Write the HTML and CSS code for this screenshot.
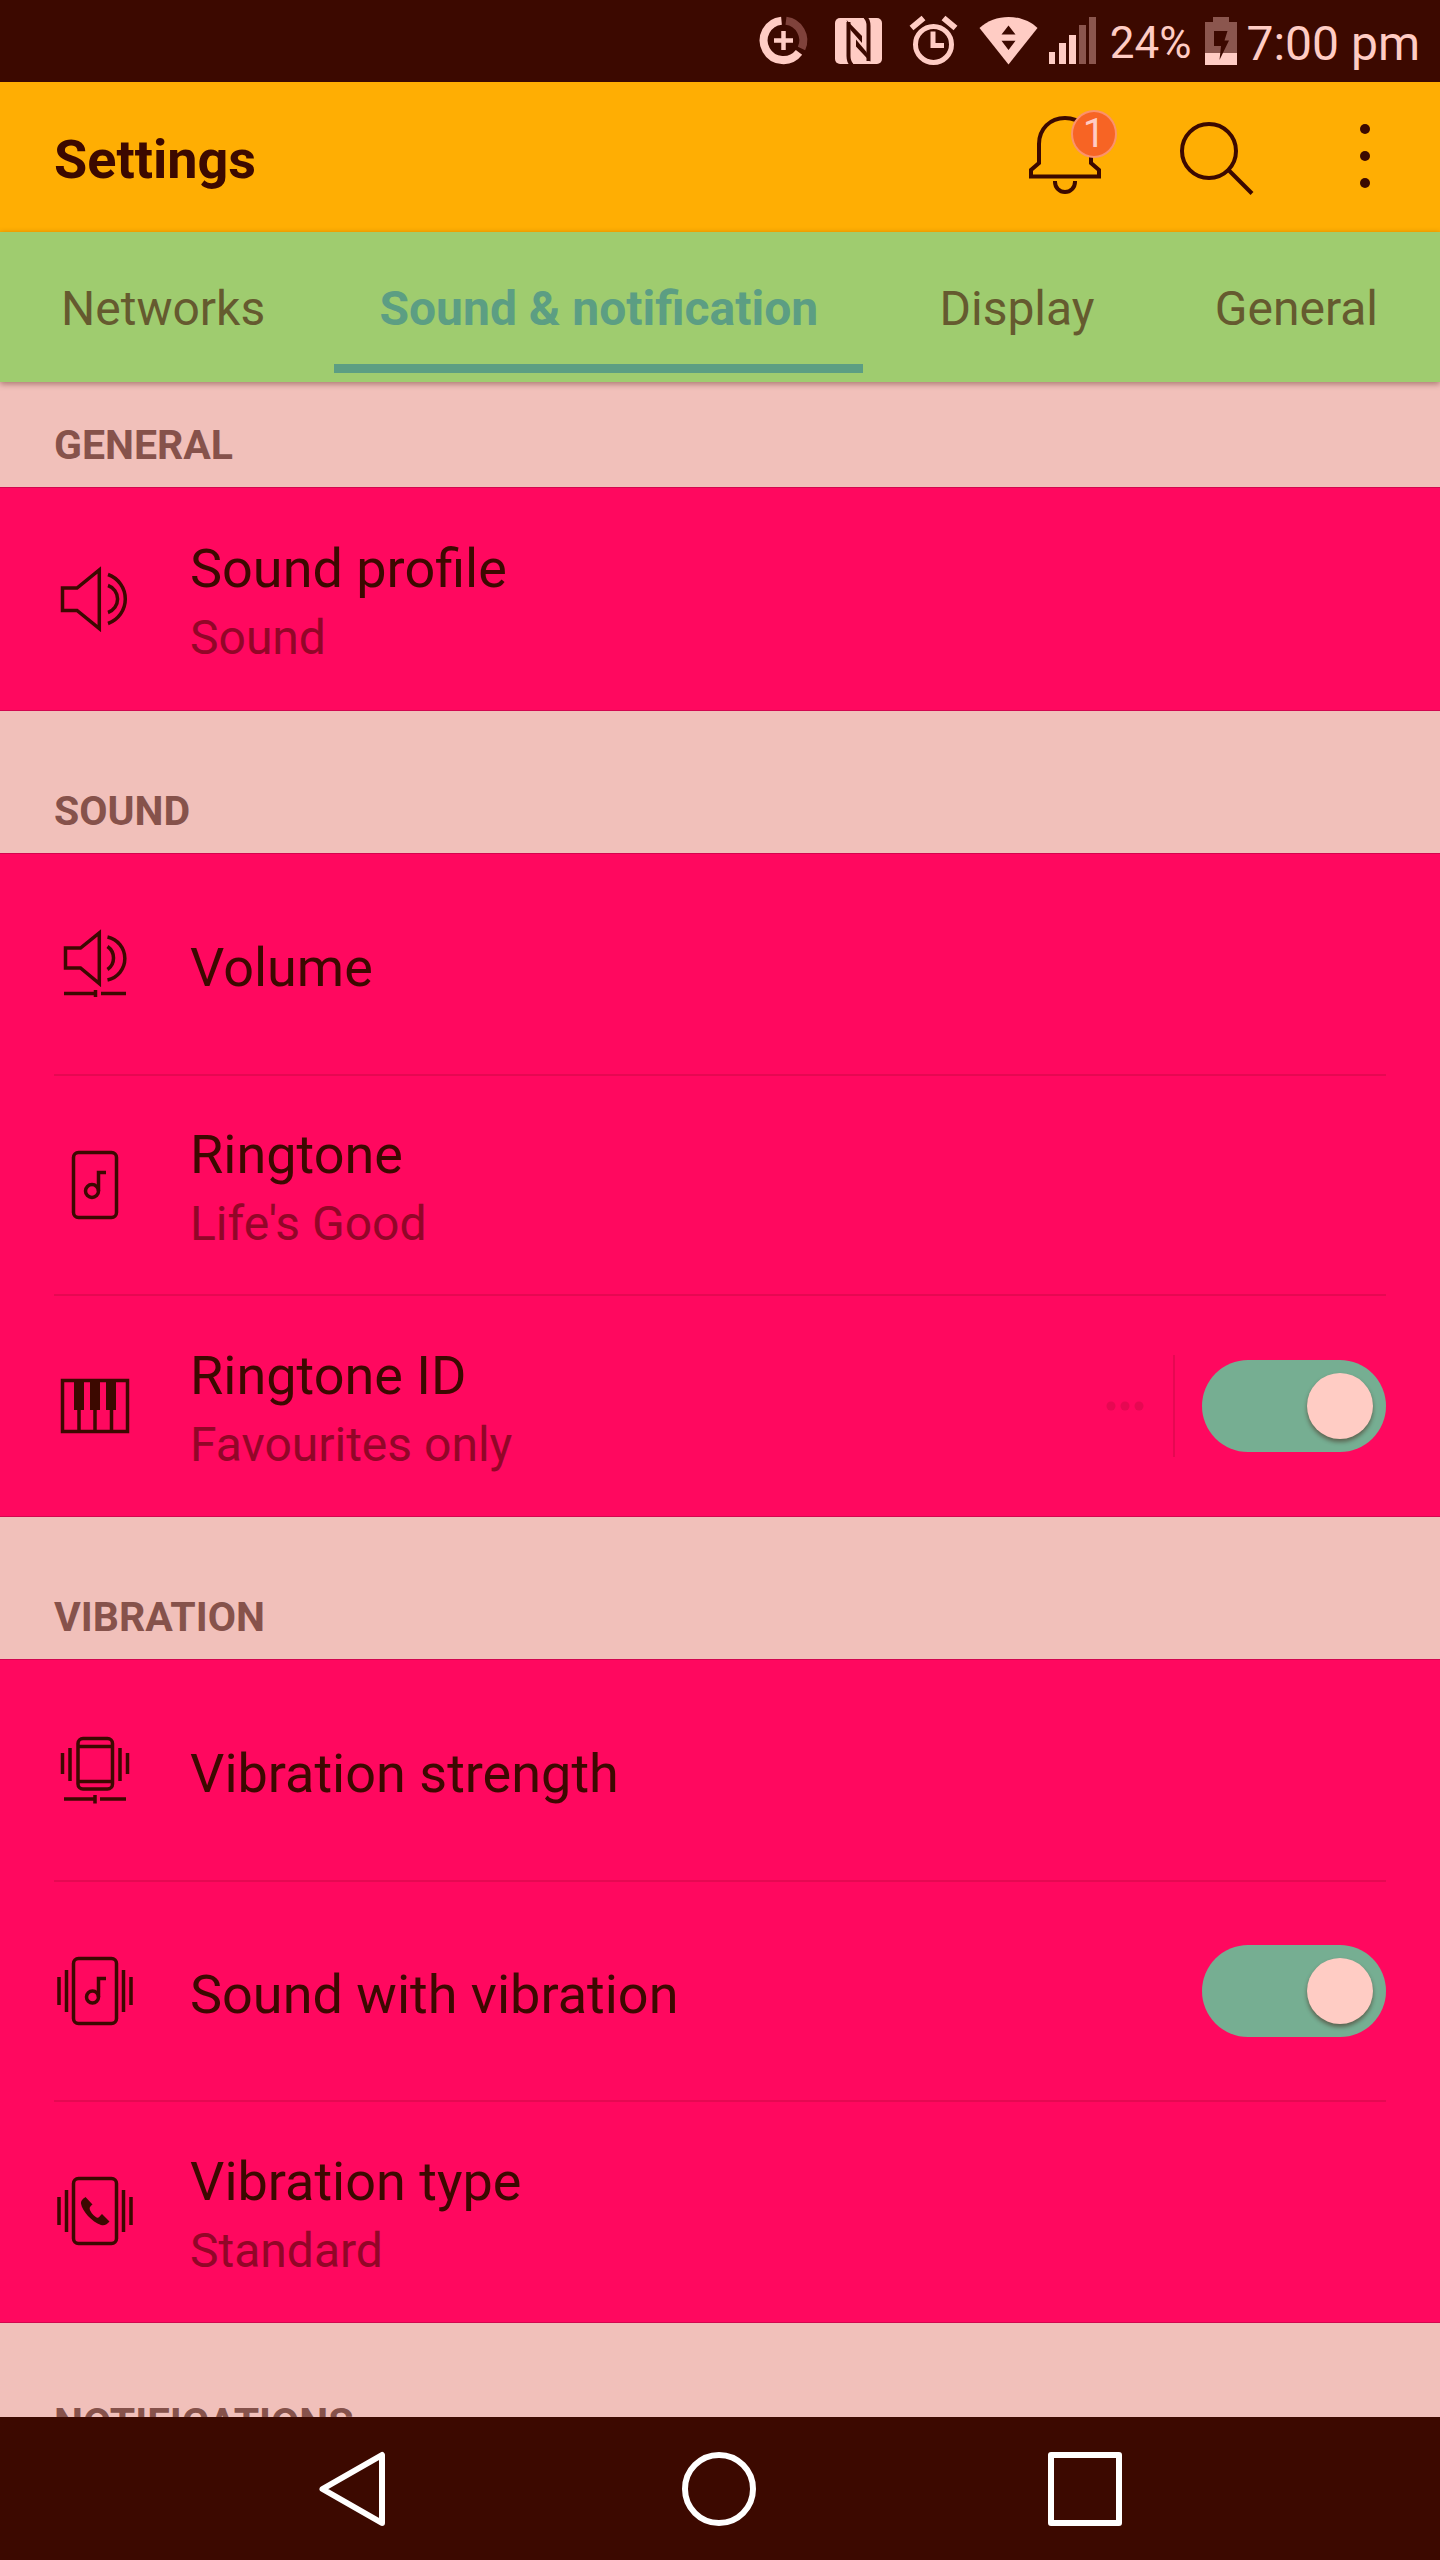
FILE: index.html
```html
<!DOCTYPE html>
<html lang="en">
<head>
<meta charset="utf-8">
<meta name="viewport" content="width=device-width, initial-scale=1">
<title>Settings</title>
<link rel="stylesheet" href="styles.css">
</head>
<body>
<div class="status">
  <svg class="status-icon" viewBox="746 15 75 56" aria-hidden="true"><g fill="none"><path d="M786 20.800A19.700 19.700 0 0 1 801.500 48.500" stroke="#7f423b" stroke-width="8"/><path d="M781.500 20.800A19.700 19.700 0 1 0 799 52.400" stroke="currentColor" stroke-width="8"/><path d="M774 40.500H793M783.500 31V50" stroke="currentColor" stroke-width="4.500"/></g></svg>
  <svg class="status-icon" viewBox="820 15 75 56" aria-hidden="true"><rect x="834" y="18" width="47" height="46" rx="5" fill="currentColor"/><path d="M847.500 22V56C847.500 60 848.500 63 851 65M867.500 61V26C867.500 22 866.500 19 864 17" fill="none" stroke="#3c0900" stroke-width="4"/><path d="M845.500 20L861 36V43L849.500 30ZM855 39.500L865.500 52L869.500 62L855 46.500Z" fill="#3c0900"/></svg>
  <svg class="status-icon" viewBox="895 15 75 56" aria-hidden="true"><g fill="none" stroke="currentColor"><circle cx="932.500" cy="44.400" r="18" stroke-width="5"/><path d="M932 31.500V45.500H943" stroke-width="5"/><path d="M910.500 28L922.500 18M954.500 28L942.500 18" stroke-width="6"/></g></svg>
  <svg class="status-icon" viewBox="970 15 75 56" aria-hidden="true"><path d="M978.500 28C994 13.300 1021 13.300 1036.500 28L1007.500 64.500Z" fill="currentColor"/><path d="M1007.500 25.500L1014.500 34.500H1000.500ZM1007.500 50L1014.500 40.700H1000.500Z" fill="#3c0900"/></svg>
  <svg class="status-signal" viewBox="1045 15 56 56" aria-hidden="true"><path d="M1048 52h6v12h-6zM1058 43h7v21h-7zM1068 35h7v29h-7z" fill="currentColor"/><path d="M1078 25h7v39h-7zM1088 17h7v47h-7z" fill="#8b564e"/></svg>
  <span class="battery-level">24%</span>
  <svg class="status-battery" viewBox="1204 15 32 56" aria-hidden="true"><path d="M1204 22h8v-5h16v5h8v43h-32z" fill="#8b564e"/><path d="M1204 53h32v12h-32z" fill="currentColor"/><path d="M1213 31H1226.500L1223.500 40.500H1228L1218.500 60L1220 46H1213Z" fill="#3c0900"/></svg>
  <time class="clock">7:00 pm</time>
</div>

<header class="appbar">
  <h1 class="title">Settings</h1>
  <button class="action" type="button" aria-label="Notifications, 1 new">
    <svg class="action-icon" viewBox="1025 112 80 90" aria-hidden="true"><path d="M1065 118C1050 118 1039 129 1039 144V163L1031 170V176.500H1099V170L1091 163V144C1091 129 1080 118 1065 118ZM1055 181V182A10 10 0 0 0 1075 182V181" fill="none" stroke="currentColor" stroke-width="4"/></svg>
    <span class="badge">1</span>
  </button>
  <button class="action" type="button" aria-label="Search">
    <svg class="action-icon" viewBox="1175 112 80 90" aria-hidden="true"><g fill="none" stroke="currentColor" stroke-width="4"><circle cx="1209" cy="151" r="27"/><path d="M1228.500 170L1252 193.500"/></g></svg>
  </button>
  <button class="action" type="button" aria-label="More options">
    <svg class="action-icon" viewBox="1325 112 80 90" aria-hidden="true"><g fill="currentColor"><circle cx="1365" cy="129" r="5"/><circle cx="1365" cy="156" r="5"/><circle cx="1365" cy="183" r="5"/></g></svg>
  </button>
</header>

<nav class="tabs" aria-label="Settings sections">
  <a class="tab" href="#networks">Networks</a>
  <a class="tab tab-active" href="#sound" aria-current="page">Sound &amp; notification</a>
  <a class="tab" href="#display">Display</a>
  <a class="tab" href="#general">General</a>
</nav>

<main class="content">
  <section>
    <h2 class="label label-first">GENERAL</h2>
    <ul class="panel">
      <li class="row">
        <svg class="row-icon" viewBox="54 558 82 82" aria-hidden="true"><path d="M62.500 588H77L99.300 570V628.500L77 610.500H62.500ZM108 585.500A14.300 14.300 0 0 1 108 612.500M108 574.500A26 26 0 0 1 108 623.500"/></svg>
        <div class="row-text"><div class="name">Sound profile</div><div class="detail">Sound</div></div>
      </li>
    </ul>
  </section>

  <section>
    <h2 class="label">SOUND</h2>
    <ul class="panel">
      <li class="row">
        <svg class="row-icon" viewBox="54 923 82 82" aria-hidden="true"><path d="M65.500 948H80.500L99.300 933V983.500L80.500 968H65.500ZM107.500 946.500A14 14 0 0 1 107.500 969.500M107.500 937A22 22 0 0 1 107.500 980M64 993.500H95M95.500 990V997M101 993.500H126"/></svg>
        <div class="row-text"><div class="name">Volume</div></div>
      </li>
      <li class="row">
        <svg class="row-icon" viewBox="54 1144 82 82" aria-hidden="true"><rect x="73.500" y="1152.500" width="43" height="65" rx="5"/><circle cx="92" cy="1191" r="6.500"/><path d="M98.500 1191V1172.500H106"/></svg>
        <div class="row-text"><div class="name">Ringtone</div><div class="detail">Life's Good</div></div>
      </li>
      <li class="row">
        <svg class="row-icon" viewBox="54 1364 82 82" aria-hidden="true"><path d="M62.500 1379.500H127.500V1430.500H62.500ZM79 1408V1430M95 1408V1430M111.500 1408V1430"/><path class="solid" d="M74 1380h10v29h-10zM90 1380h10v29h-10zM106 1380h10v29h-10z"/></svg>
        <div class="row-text"><label class="name" for="ringtone-id">Ringtone ID</label><div class="detail">Favourites only</div></div>
        <button class="more" type="button" aria-label="Ringtone ID options"><svg class="more-dots" viewBox="0 0 38 10" aria-hidden="true"><g fill="currentColor"><circle cx="5" cy="5" r="4.500"/><circle cx="19" cy="5" r="4.500"/><circle cx="33" cy="5" r="4.500"/></g></svg></button>
        <input class="switch" id="ringtone-id" type="checkbox" role="switch" checked>
      </li>
    </ul>
  </section>

  <section>
    <h2 class="label">VIBRATION</h2>
    <ul class="panel">
      <li class="row">
        <svg class="row-icon" viewBox="54 1729 82 82" aria-hidden="true"><rect x="78" y="1738.500" width="34.500" height="50.500" rx="5"/><path d="M78 1746.500H112M78 1781.500H112M62.500 1753V1774M70 1748V1781M120 1748V1781M127.500 1753V1774M64 1799H95M95 1795V1803.500M100 1799H126"/></svg>
        <div class="row-text"><div class="name">Vibration strength</div></div>
      </li>
      <li class="row">
        <svg class="row-icon" viewBox="54 1950 82 82" aria-hidden="true"><rect x="73.500" y="1958.500" width="43" height="65" rx="5"/><path d="M59 1977V2005M66.500 1970V2012M123.500 1970V2012M131 1977V2005M98.500 1997V1978.500H106"/><circle cx="92.500" cy="1997" r="6"/></svg>
        <div class="row-text"><label class="name" for="sound-vibration">Sound with vibration</label></div>
        <input class="switch" id="sound-vibration" type="checkbox" role="switch" checked>
      </li>
      <li class="row">
        <svg class="row-icon" viewBox="54 2171 82 82" aria-hidden="true"><rect x="73.500" y="2178.500" width="43" height="65" rx="5"/><path d="M59 2197V2225M66.500 2190V2232M123.500 2190V2232M131 2197V2225"/><path class="solid" d="M85.500 2197L92.500 2204.500C89.500 2207 89 2208 90.500 2211C92 2214 94.500 2216.500 97 2217.700C99 2218 100 2216 102 2214L109.500 2221.500C107 2224 105 2226 101 2225C92 2222 82 2211 81 2203.500C81 2200 83 2199 85.500 2197Z"/></svg>
        <div class="row-text"><div class="name">Vibration type</div><div class="detail">Standard</div></div>
      </li>
    </ul>
  </section>

  <section>
    <h2 class="label">NOTIFICATIONS</h2>
  </section>
</main>

<nav class="navbar" aria-label="System navigation">
  <button class="nav-button" type="button" aria-label="Back"><svg class="nav-icon" viewBox="0 0 80 80" aria-hidden="true"><path d="M67 6V74L7.500 40Z"/></svg></button>
  <button class="nav-button" type="button" aria-label="Home"><svg class="nav-icon" viewBox="0 0 80 80" aria-hidden="true"><circle cx="39" cy="40" r="34"/></svg></button>
  <button class="nav-button" type="button" aria-label="Recent apps"><svg class="nav-icon" viewBox="0 0 80 80" aria-hidden="true"><rect x="6" y="6" width="68" height="68"/></svg></button>
</nav>
</body>
</html>
```
FILE: styles.css
```css
* {
  box-sizing: border-box;
}

body {
  margin: 0;
  height: 100vh;
  display: flex;
  flex-direction: column;
  background: #f1c0ba;
  color: #3c0900;
  font-family: Roboto, "Liberation Sans", sans-serif;
  font-size: 48px;
}

h1, h2, ul {
  margin: 0;
  padding: 0;
}

button {
  border: 0;
  padding: 0;
  background: none;
  color: inherit;
  font: inherit;
}

svg {
  display: block;
  flex: none;
}

.status {
  flex: none;
  display: flex;
  align-items: center;
  justify-content: flex-end;
  height: 82px;
  padding: 4px 20px 0 0;
  background: #3c0900;
  color: #ffccc4;
  white-space: nowrap;
}

.status-icon {
  width: 75px;
  height: 56px;
}

.status-signal {
  width: 56px;
  height: 56px;
}

.status-battery {
  width: 32px;
  height: 56px;
}

.battery-level {
  margin: 0 14px 0 8px;
  font-size: 44px;
}

.clock {
  margin-left: 9px;
}

.appbar {
  flex: none;
  display: flex;
  align-items: center;
  gap: 70px;
  height: 150px;
  padding: 0 35px 0 54px;
  background: #ffae03;
}

.title {
  flex: 1;
  padding-top: 4px;
  font-size: 54px;
  font-weight: 700;
}

.action {
  position: relative;
}

.action-icon {
  width: 80px;
  height: 90px;
}

.badge {
  position: absolute;
  top: -2px;
  right: -12px;
  width: 46px;
  height: 48px;
  border: 2px solid #fb926b;
  border-radius: 50%;
  background: #f76424;
  color: #ffccc4;
  font-size: 40px;
  line-height: 44px;
  text-align: center;
}

.tabs {
  flex: none;
  position: relative;
  display: flex;
  justify-content: space-between;
  height: 150px;
  padding: 0 62px 0 61px;
  background: #9fcc6f;
  box-shadow: 0 2px 6px rgba(60, 9, 0, 0.4);
}

.tab {
  height: 141px;
  padding-top: 10px;
  border-bottom: 9px solid transparent;
  color: #655a2f;
  line-height: 134px;
  text-decoration: none;
  white-space: nowrap;
}

.tab-active {
  margin: 0 -44px 0 -51px;
  padding: 10px 45px 0;
  border-color: #5c9e83;
  color: #5c9e83;
  font-weight: 700;
}

.content {
  flex: 1;
  min-height: 0;
  overflow-y: auto;
  scrollbar-width: none;
}

.label {
  padding: 76px 54px 18px;
  color: #86524b;
  font-size: 41px;
  font-weight: 700;
  line-height: 48px;
}

.label-first {
  padding-top: 39px;
}

.panel {
  border: solid #d3064f;
  border-width: 1px 0;
  background: #ff085f;
  list-style: none;
}

.row {
  display: flex;
  align-items: center;
  min-height: 220px;
  margin: 0 54px;
}

.row:not(:last-child) {
  border-bottom: 2px solid #e60852;
}

.row:first-child {
  min-height: 222px;
}

.row-icon {
  width: 82px;
  height: 82px;
  margin-right: 54px;
  fill: none;
  stroke: currentColor;
  stroke-width: 3.5;
}

.solid {
  fill: currentColor;
  stroke: none;
}

.row-text {
  flex: 1;
  padding-top: 8px;
}

.name {
  display: block;
  font-size: 54px;
  line-height: 70px;
}

.detail {
  color: #920628;
  line-height: 68px;
}

.more {
  display: flex;
  align-items: center;
  height: 102px;
  margin-right: 27px;
  padding-right: 29px;
  border-right: 2px solid #e60852;
  color: #e60852;
}

.more-dots {
  width: 38px;
  height: 10px;
}

.switch {
  appearance: none;
  flex: none;
  width: 184px;
  height: 92px;
  margin: 0;
  padding: 13px;
  border-radius: 46px;
  background: #76ae92;
}

.switch::before {
  content: "";
  display: block;
  width: 66px;
  height: 66px;
  border-radius: 50%;
  background: #ffccc4;
  box-shadow: 0 3px 4px rgba(60, 9, 0, 0.45);
}

.switch:checked::before {
  margin-left: auto;
}

.navbar {
  flex: none;
  display: grid;
  grid-template-columns: repeat(3, 1fr);
  height: 143px;
  padding: 0 12%;
  background: #3c0900;
  color: #fff;
}

.nav-button {
  display: flex;
  align-items: center;
  justify-content: center;
}

.nav-icon {
  width: 80px;
  height: 80px;
  fill: none;
  stroke: currentColor;
  stroke-width: 6;
  stroke-linejoin: round;
}
```
